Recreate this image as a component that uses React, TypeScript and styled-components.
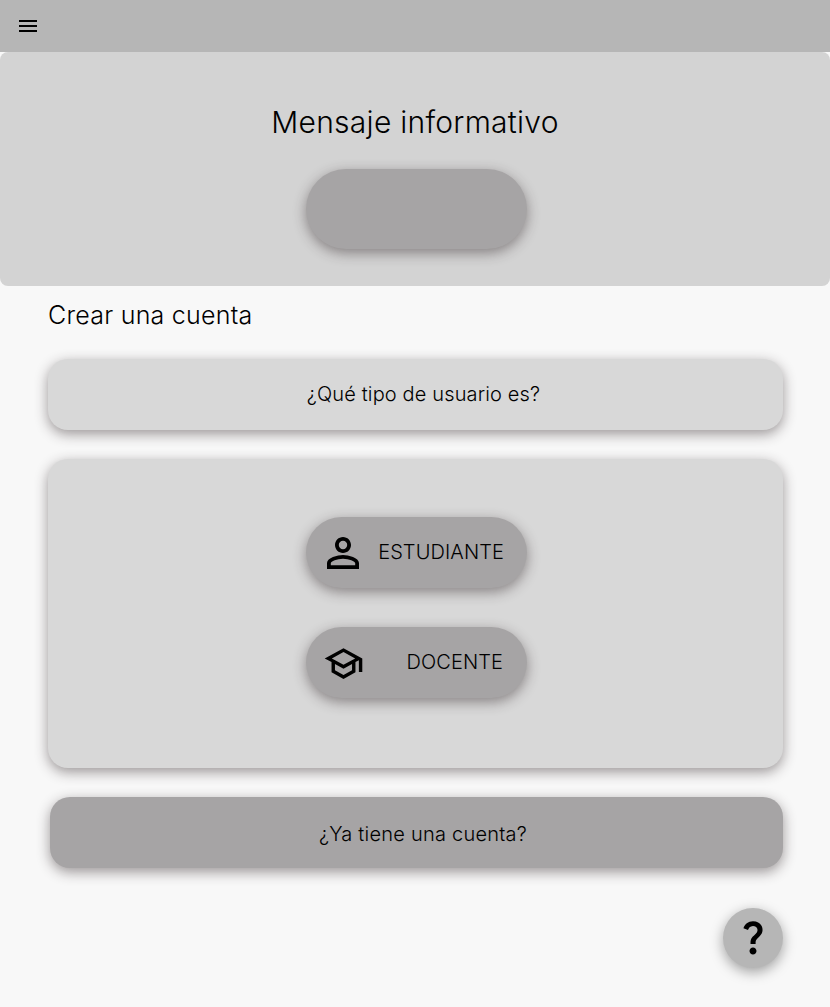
import styled, { createGlobalStyle } from "styled-components";
import { MdMenu, MdPersonOutline, MdOutlineSchool, MdQuestionMark } from "react-icons/md";

const GlobalStyle = createGlobalStyle`
  *, *::before, *::after { box-sizing: border-box; }
  body {
    margin: 0;
    background: #f8f8f8;
    color: #000;
    font-family: Inter, "Liberation Sans", sans-serif;
    font-weight: 300;
  }
`;

const shadow = "0 4px 13px rgba(44, 32, 34, 0.46)";

const Page = styled.div`
  display: flex;
  flex-direction: column;
  min-height: 1007px;
`;

const TopBar = styled.header`
  display: flex;
  align-items: center;
  height: 52px;
  padding-left: 16px;
  background: #b6b6b6;
  svg { display: block; }
`;

const Banner = styled.section`
  display: flex;
  flex-direction: column;
  align-items: center;
  height: 234px;
  padding: 52px 0 0;
  border-radius: 8px;
  background: #d3d3d3;
`;

const BannerTitle = styled.h1`
  margin: 0 0 29px;
  font-size: 30px;
  font-weight: 340;
  line-height: 36px;
  letter-spacing: 0.26px;
`;

const BannerButton = styled.button`
  width: 221px;
  height: 80px;
  margin-left: 3px;
  border: 0;
  border-radius: 40px;
  background: #a6a4a5;
  box-shadow: ${shadow};
`;

const Content = styled.main`
  display: flex;
  flex-direction: column;
  padding: 14px 47px 0 48px;
`;

const SectionTitle = styled.h2`
  margin: 0 0 29px;
  font-size: 25px;
  font-weight: 300;
  line-height: 30px;
  letter-spacing: 0.24px;
`;

const Question = styled.div`
  display: flex;
  align-items: center;
  justify-content: center;
  height: 71px;
  padding: 0 0 2px 16px;
  border-radius: 20px;
  background: #d8d8d8;
  box-shadow: ${shadow};
  font-size: 20px;
  letter-spacing: 0.14px;
`;

const Options = styled.div`
  display: flex;
  flex-direction: column;
  align-items: center;
  gap: 39px;
  height: 309px;
  margin-top: 29px;
  padding: 58px 0 0 2px;
  border-radius: 20px;
  background: #d8d8d8;
  box-shadow: ${shadow};
`;

const OptionButton = styled.button`
  display: flex;
  align-items: center;
  justify-content: space-between;
  width: 221px;
  height: 71px;
  padding: 0 23px 0 17px;
  border: 0;
  border-radius: 36px;
  background: #a6a4a5;
  box-shadow: ${shadow};
  color: #000;
  font: 300 20px Inter, "Liberation Sans", sans-serif;
`;

const OptionLabel = styled.span<{ $inset?: number }>`
  padding: 0 ${(p) => p.$inset ?? 0}px 2px 0;
  letter-spacing: 0.1px;
`;

const IconSlot = styled.span<{ $drop?: number }>`
  display: flex;
  align-items: center;
  justify-content: center;
  width: 40px;
  height: 71px;
  padding-top: ${(p) => p.$drop ?? 0}px;
  flex: none;
  svg { flex: none; }
`;

const AccountButton = styled.button`
  height: 71px;
  margin: 29px 0 0 2px;
  padding: 2px 0 0 13px;
  border: 0;
  border-radius: 20px;
  background: #a6a4a5;
  box-shadow: ${shadow};
  color: #000;
  font: 300 20px Inter, "Liberation Sans", sans-serif;
  letter-spacing: 0.23px;
`;

const HelpButton = styled.button`
  display: flex;
  align-items: center;
  justify-content: center;
  align-self: flex-end;
  width: 60px;
  height: 60px;
  margin-top: 40px;
  padding: 0 0 2px;
  border: 0;
  border-radius: 50%;
  background: #b6b6b6;
  box-shadow: 0 4px 13px rgba(0, 0, 0, 0.36);
  color: #000;
`;

export default function App() {
  return (
    <Page>
      <GlobalStyle />
      <TopBar>
        <MdMenu size={24} />
      </TopBar>
      <Banner>
        <BannerTitle>Mensaje informativo</BannerTitle>
        <BannerButton aria-label="Mensaje informativo" />
      </Banner>
      <Content>
        <SectionTitle>Crear una cuenta</SectionTitle>
        <Question>¿Qué tipo de usuario es?</Question>
        <Options>
          <OptionButton>
            <IconSlot><MdPersonOutline size={48} /></IconSlot>
            <OptionLabel>ESTUDIANTE</OptionLabel>
          </OptionButton>
          <OptionButton>
            <IconSlot $drop={2}><MdOutlineSchool size={41} /></IconSlot>
            <OptionLabel $inset={1}>DOCENTE</OptionLabel>
          </OptionButton>
        </Options>
        <AccountButton>¿Ya tiene una cuenta?</AccountButton>
        <HelpButton aria-label="Ayuda">
          <MdQuestionMark size={42} />
        </HelpButton>
      </Content>
    </Page>
  );
}
